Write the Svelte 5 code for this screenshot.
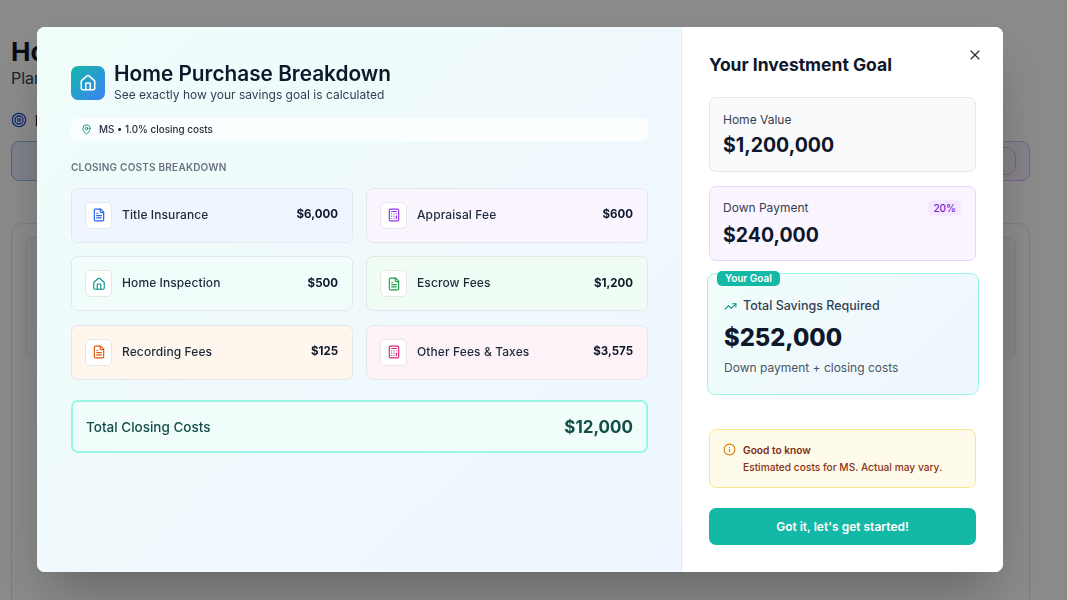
<script>
  const costs = [
    { name: 'Title Insurance', amount: '$6,000', tone: 'blue', icon: 'file' },
    { name: 'Appraisal Fee', amount: '$600', tone: 'purple', icon: 'calc' },
    { name: 'Home Inspection', amount: '$500', tone: 'teal', icon: 'house' },
    { name: 'Escrow Fees', amount: '$1,200', tone: 'green', icon: 'file' },
    { name: 'Recording Fees', amount: '$125', tone: 'orange', icon: 'file' },
    { name: 'Other Fees & Taxes', amount: '$3,575', tone: 'pink', icon: 'calc' },
  ];
</script>

{#snippet glyph(name)}
  {#if name === 'file'}
    <path d="M15 2H6a2 2 0 0 0-2 2v16a2 2 0 0 0 2 2h12a2 2 0 0 0 2-2V7Z" />
    <path d="M14 2v4a2 2 0 0 0 2 2h4" />
    <path d="M10 9H8" />
    <path d="M16 13H8" />
    <path d="M16 17H8" />
  {:else if name === 'calc'}
    <rect x="4" y="2" width="16" height="20" rx="2" />
    <path d="M8 6h8" />
    <path d="M16 14v4" />
    <path d="M16 10h.01M12 10h.01M8 10h.01M12 14h.01M8 14h.01M12 18h.01M8 18h.01" />
  {:else if name === 'house'}
    <path d="M15 21v-8a1 1 0 0 0-1-1h-4a1 1 0 0 0-1 1v8" />
    <path d="M3 10a2 2 0 0 1 .709-1.528l7-5.999a2 2 0 0 1 2.582 0l7 5.999A2 2 0 0 1 21 10v9a2 2 0 0 1-2 2H5a2 2 0 0 1-2-2z" />
  {/if}
{/snippet}

<div class="page">
  <h1>Home</h1>
  <p class="lead">Plan</p>
  <div class="target-row">
    <svg class="target" viewBox="0 0 24 24" fill="none" stroke="currentColor" stroke-width="2">
      <circle cx="12" cy="12" r="10" />
      <circle cx="12" cy="12" r="6" />
      <circle cx="12" cy="12" r="2" />
    </svg>
    <b>Investment</b>
  </div>
  <div class="tiles">
    <div class="tile tile-blue"></div>
    <div class="tile tile-purple"><span class="tile-knob"></span></div>
  </div>
  <div class="panel"><div class="panel-inner"></div></div>
</div>

<div class="backdrop">
  <div class="modal">
    <section class="left">
      <header class="head">
        <div class="head-icon">
          <svg viewBox="0 0 24 24" fill="none" stroke="currentColor" stroke-width="2" stroke-linecap="round" stroke-linejoin="round">
            {@render glyph('house')}
          </svg>
        </div>
        <div>
          <h2>Home Purchase Breakdown</h2>
          <p>See exactly how your savings goal is calculated</p>
        </div>
      </header>

      <div class="location">
        <svg viewBox="0 0 24 24" fill="none" stroke="currentColor" stroke-width="2" stroke-linecap="round" stroke-linejoin="round">
          <path d="M20 10c0 4.993-5.539 10.193-7.399 11.799a1 1 0 0 1-1.202 0C9.539 20.193 4 14.993 4 10a8 8 0 0 1 16 0" />
          <circle cx="12" cy="10" r="3" />
        </svg>
        <span>MS • 1.0% closing costs</span>
      </div>

      <h3>CLOSING COSTS BREAKDOWN</h3>

      <div class="grid">
        {#each costs as cost}
          <div class="cost {cost.tone}">
            <span class="cost-icon">
              <svg viewBox="0 0 24 24" fill="none" stroke="currentColor" stroke-width="2" stroke-linecap="round" stroke-linejoin="round">
                {@render glyph(cost.icon)}
              </svg>
            </span>
            <span class="cost-name">{cost.name}</span>
            <span class="cost-amount">{cost.amount}</span>
          </div>
        {/each}
      </div>

      <div class="total">
        <span>Total Closing Costs</span>
        <strong>$12,000</strong>
      </div>
    </section>

    <section class="right">
      <button class="close" aria-label="Close">
        <svg viewBox="0 0 24 24" fill="none" stroke="currentColor" stroke-width="1.7" stroke-linecap="round" stroke-linejoin="round">
          <path d="M18 6 6 18" />
          <path d="m6 6 12 12" />
        </svg>
      </button>
      <h2 class="goal-title">Your Investment Goal</h2>

      <div class="stat">
        <div class="stat-label">Home Value</div>
        <div class="stat-value">$1,200,000</div>
      </div>

      <div class="stat stat-down">
        <div class="stat-label">Down Payment <span class="pct">20%</span></div>
        <div class="stat-value">$240,000</div>
      </div>

      <div class="goal">
        <span class="goal-badge">Your Goal</span>
        <div class="goal-label">
          <svg viewBox="0 0 24 24" fill="none" stroke="currentColor" stroke-width="2" stroke-linecap="round" stroke-linejoin="round">
            <path d="M22 7l-8.500 8.500-5-5L2 17" />
            <path d="M16 7h6v6" />
          </svg>
          Total Savings Required
        </div>
        <div class="goal-value">$252,000</div>
        <div class="goal-note">Down payment + closing costs</div>
      </div>

      <div class="notice">
        <svg viewBox="0 0 24 24" fill="none" stroke="currentColor" stroke-width="2" stroke-linecap="round" stroke-linejoin="round">
          <circle cx="12" cy="12" r="10" />
          <path d="M12 16v-4" />
          <path d="M12 8h.01" />
        </svg>
        <div>
          <div class="notice-title">Good to know</div>
          <div class="notice-text">Estimated costs for MS. Actual may vary.</div>
        </div>
      </div>

      <button class="cta">Got it, let's get started!</button>
    </section>
  </div>
</div>

<style>
  :global(body) {
    margin: 0;
    background: #fff;
    font-family: Inter, "Liberation Sans", sans-serif;
    overflow: hidden;
  }

  .page {
    height: 600px;
    box-sizing: border-box;
    padding: 38px 37px 0 11px;
    color: #0f172a;
    overflow: hidden;
  }

  .page h1 {
    margin: 0;
    font-size: 26px;
    line-height: 28px;
    font-weight: 700;
  }

  .lead {
    margin: 2px 0 0;
    font-size: 16px;
    line-height: 20px;
    color: #334155;
  }

  .target-row {
    display: flex;
    align-items: center;
    gap: 8px;
    margin-top: 24px;
    height: 16px;
    font-size: 14px;
  }

  .target {
    width: 16px;
    height: 16px;
    color: #1d4ed8;
  }

  .tiles {
    display: grid;
    grid-template-columns: 1fr 1fr;
    gap: 12px;
    margin-top: 13px;
  }

  .tile {
    height: 38px;
    border-radius: 8px;
    display: flex;
    justify-content: flex-end;
    align-items: center;
    padding-right: 13px;
  }

  .tile-blue {
    border: 1px solid #93b4f0;
    background: #e8eefc;
  }

  .tile-purple {
    border: 1px solid #d8b4fe;
    background: #f6eefe;
  }

  .tile-knob {
    width: 28px;
    height: 26px;
    border-radius: 10px;
    border: 1px solid #ccc0d8;
  }

  .panel {
    margin-top: 42px;
    height: 400px;
    border: 1px solid #e5e7eb;
    border-radius: 12px;
    padding: 13px;
  }

  .panel-inner {
    height: 120px;
    border: 1px solid #e5e7eb;
    border-radius: 8px;
    background: #f8f8f8;
  }

  .backdrop {
    position: fixed;
    inset: 0;
    background: rgba(0, 0, 0, 0.46);
  }

  .modal {
    position: absolute;
    left: 37px;
    top: 27px;
    width: 966px;
    height: 545px;
    display: flex;
    border-radius: 8px;
    overflow: hidden;
    background: #fff;
    box-shadow: 0 25px 50px -12px rgba(0, 0, 0, 0.3);
  }

  .left {
    width: 645px;
    flex: none;
    box-sizing: border-box;
    padding: 37px 34px 0;
    background: linear-gradient(135deg, #f0fdfa, #eff6ff);
  }

  .head {
    display: flex;
    align-items: center;
    gap: 9px;
  }

  .head-icon {
    width: 34px;
    height: 34px;
    border-radius: 7px;
    background: linear-gradient(135deg, #14b8a6, #3b82f6);
    color: #fff;
    display: flex;
    align-items: center;
    justify-content: center;
    flex: none;
  }

  .head-icon svg {
    width: 18px;
    height: 18px;
  }

  .head h2 {
    margin: 0 0 4px;
    font-size: 20.800px;
    line-height: 20px;
    font-weight: 600;
    color: #0f172a;
  }

  .head p {
    margin: 0;
    font-size: 12px;
    line-height: 14px;
    color: #334155;
  }

  .location {
    display: flex;
    align-items: center;
    gap: 7px;
    height: 23px;
    box-sizing: border-box;
    margin-top: 16px;
    padding: 0 0 1px 10px;
    background: rgba(255, 255, 255, 0.75);
    border-radius: 6px;
    font-size: 9.900px;
    font-weight: 500;
    color: #1e293b;
  }

  .location svg {
    width: 11px;
    height: 11px;
    color: #0d9488;
  }

  h3 {
    margin: 20px 0 0;
    font-size: 10px;
    line-height: 12px;
    font-weight: 600;
    letter-spacing: 0.22px;
    color: #6b7280;
  }

  .grid {
    display: grid;
    grid-template-columns: 1fr 1fr;
    gap: 13.500px 13px;
    margin-top: 14.800px;
  }

  .cost {
    display: flex;
    align-items: center;
    height: 55px;
    box-sizing: border-box;
    padding: 0 14px 0 13px;
    border: 1px solid #e5e7eb;
    border-radius: 7px;
  }

  .cost-icon {
    width: 27px;
    height: 27px;
    box-sizing: border-box;
    border: 1px solid #e5e7eb;
    border-radius: 5px;
    background: #fff;
    display: flex;
    align-items: center;
    justify-content: center;
    margin-right: 10px;
  }

  .cost-icon svg {
    width: 14px;
    height: 14px;
  }

  .cost-name {
    flex: 1;
    padding-bottom: 2px;
    font-size: 12px;
    letter-spacing: 0.1px;
    font-weight: 500;
    color: #1e293b;
  }

  .cost-amount {
    padding-bottom: 2px;
    font-size: 11.500px;
    font-weight: 700;
    color: #0f172a;
  }

  .blue { background: #eff6ff; }
  .blue svg { color: #2563eb; }
  .purple { background: #faf5ff; }
  .purple svg { color: #9333ea; }
  .teal { background: #f0fdfa; }
  .teal svg { color: #0d9488; }
  .green { background: #f0fdf4; }
  .green svg { color: #16a34a; }
  .orange { background: #fff7ed; }
  .orange svg { color: #ea580c; }
  .pink { background: #fdf2f8; }
  .pink svg { color: #db2777; }

  .total {
    display: flex;
    align-items: center;
    justify-content: space-between;
    height: 53px;
    box-sizing: border-box;
    margin-top: 20.700px;
    padding: 0 13px;
    border: 2px solid #99f6e4;
    border-radius: 7px;
    background: #f0fdfa;
    color: #134e4a;
    font-size: 13.500px;
    font-weight: 500;
  }

  .total strong {
    font-size: 17px;
    font-weight: 700;
  }

  .right {
    position: relative;
    flex: 1;
    box-sizing: border-box;
    padding: 28px 27px 27px;
    margin-left: -1px;
    background: #fff;
    border-left: 1px solid #e5e7eb;
    display: flex;
    flex-direction: column;
  }

  .close {
    position: absolute;
    right: 20px;
    top: 20px;
    width: 16px;
    height: 16px;
    padding: 0;
    border: 0;
    background: none;
    color: #1f2937;
  }

  .goal-title {
    margin: 0 0 22px;
    font-size: 17.500px;
    line-height: 20px;
    font-weight: 700;
    color: #0f172a;
  }

  .stat {
    height: 75px;
    box-sizing: border-box;
    padding: 14px 14px 0 13px;
    margin-bottom: 14px;
    border: 1px solid #e5e7eb;
    border-radius: 7px;
    background: #f9fafb;
  }

  .stat-down {
    background: #faf5ff;
    border-color: #e9d5ff;
  }

  .stat-label {
    display: flex;
    justify-content: space-between;
    align-items: center;
    height: 16px;
    font-size: 12px;
    line-height: 16px;
    color: #374151;
  }

  .stat-down .stat-label {
    margin-top: -1px;
  }

  .pct {
    font-size: 10px;
    font-weight: 500;
    color: #7e22ce;
    background: #f3e8ff;
    border-radius: 5px;
    padding: 0 5px;
  }

  .stat-value {
    margin-top: 4px;
    font-size: 19.500px;
    line-height: 26px;
    font-weight: 700;
    color: #0f172a;
  }

  .stat-down .stat-value {
    margin-top: 6px;
  }

  .goal {
    position: relative;
    height: 122px;
    box-sizing: border-box;
    margin: -2px -3px 0 -2px;
    padding: 24px 17px 0 16px;
    border: 1px solid #99f6e4;
    border-radius: 8px;
    background: linear-gradient(135deg, #f0fdfa, #eff6ff);
  }

  .goal-badge {
    position: absolute;
    left: 9px;
    top: -3px;
    height: 15px;
    padding: 0 8px;
    border-radius: 5px;
    background: #14b8a6;
    color: #fff;
    font-size: 10px;
    line-height: 15px;
    font-weight: 600;
  }

  .goal-label {
    display: flex;
    align-items: center;
    gap: 6px;
    font-size: 12.500px;
    line-height: 16px;
    font-weight: 500;
    color: #334155;
  }

  .goal-label svg {
    width: 13px;
    height: 13px;
    color: #0d9488;
  }

  .goal-value {
    margin-top: 7px;
    font-size: 23.700px;
    line-height: 34px;
    font-weight: 800;
    color: #0f172a;
  }

  .goal-note {
    margin-top: 5px;
    font-size: 12px;
    line-height: 16px;
    color: #4b5563;
  }

  .notice {
    display: flex;
    gap: 7px;
    margin-top: auto;
    height: 59px;
    box-sizing: border-box;
    padding: 13px 13px 0;
    border: 1px solid #fde68a;
    border-radius: 7px;
    background: #fffbeb;
  }

  .notice svg {
    width: 13px;
    height: 13px;
    color: #d97706;
    flex: none;
  }

  .notice-title {
    font-size: 10.200px;
    line-height: 14px;
    font-weight: 600;
    color: #7c2d12;
  }

  .notice-text {
    margin-top: 3px;
    font-size: 10.200px;
    line-height: 14px;
    font-weight: 500;
    color: #8a3310;
  }

  .cta {
    margin-top: 20px;
    height: 37px;
    border: 0;
    border-radius: 7px;
    background: #14b8a6;
    color: #fff;
    font-family: inherit;
    font-size: 12px;
    font-weight: 600;
  }
</style>
